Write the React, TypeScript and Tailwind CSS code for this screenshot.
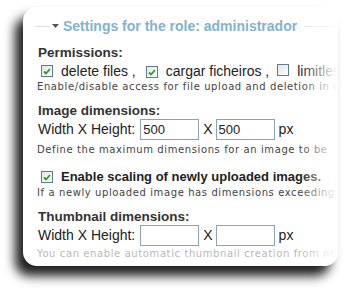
import React from 'react';

const Check = ({ checked }: { checked: boolean }) => (
  <span className="inline-flex h-[12px] w-[12px] shrink-0 items-center justify-center border border-[#5b7d92] bg-gradient-to-br from-[#e4e4e4] to-white">
    {checked && (
      <svg width="8" height="7" viewBox="0 0 8 7">
        <path d="M1 3.5 L3 5.5 L7 1" fill="none" stroke="#22a022" strokeWidth="1.8" />
      </svg>
    )}
  </span>
);

const SizeRow = ({ w, h }: { w: string; h: string }) => (
  <div className="flex h-[21px] items-center pl-[15px] text-[14px] text-[#222]">
    <span>Width X Height:</span>
    <input
      readOnly
      value={w}
      className="ml-[5px] h-[21px] w-[59px] border border-[#8aa4b4] bg-white px-[2px] text-[13px] text-[#222] outline-none"
    />
    <span className="ml-[4px]">X</span>
    <input
      readOnly
      value={h}
      className="ml-[3px] h-[21px] w-[59px] border border-[#8aa4b4] bg-white px-[2px] text-[13px] text-[#222] outline-none"
    />
    <span className="ml-[4px]">px</span>
  </div>
);

const Help = ({ children, faded }: { children: React.ReactNode; faded?: boolean }) => (
  <div
    className={`h-[12px] pl-[14px] text-[10px] leading-[12px] tracking-[0.6px] font-['DejaVu_Sans',sans-serif] ${
      faded ? 'text-[#b8b8b8]' : 'text-[#444]'
    }`}
  >
    {children}
  </div>
);

const App = () => {
  return (
    <div className="h-[290px] w-[345px] bg-white pl-[23px] pt-[7px] font-['Liberation_Sans',Arial,sans-serif]">
      <div className="relative h-[259px] w-[315px] overflow-hidden rounded-[14px] bg-white pt-[11px] shadow-[-8px_10px_11px_rgba(0,0,0,0.88)] whitespace-nowrap">
        {/* legend */}
        <div className="flex h-[16px] items-center">
          <span className="ml-[12px] h-px w-[15px] bg-[#e2e2e2]" />
          <svg className="ml-[2px]" width="7" height="4" viewBox="0 0 7 4">
            <path d="M0 0 H7 L3.5 4 Z" fill="#555" />
          </svg>
          <span className="ml-[4px] text-[14px] font-bold text-[#80b3d1]">
            Settings for the role: administrador
          </span>
          <span className="ml-[7px] h-px flex-1 bg-[#e2e2e2]" />
        </div>

        <div className="mt-[11px] flex h-[16px] items-center pl-[15px] text-[13.5px] font-bold text-[#333]">
          Permissions:
        </div>
        <div className="mt-[2px] flex h-[16px] items-center pl-[18px] text-[14px] text-[#222]">
          <Check checked />
          <span className="ml-[8px]">delete files ,</span>
          <span className="ml-[10px]">
            <Check checked />
          </span>
          <span className="ml-[8px]">cargar ficheiros ,</span>
          <span className="ml-[8px]">
            <Check checked={false} />
          </span>
          <span className="ml-[8px]">limitless</span>
        </div>
        <div className="mt-[2px]">
          <Help>Enable/disable access for file upload and deletion in user</Help>
        </div>

        <div className="mt-[10px] flex h-[16px] items-center pl-[15px] text-[13.5px] font-bold text-[#333]">
          Image dimensions:
        </div>
        <SizeRow w="500" h="500" />
        <div className="mt-[4px]">
          <Help>Define the maximum dimensions for an image to be</Help>
        </div>

        <div className="mt-[13px] flex h-[16px] items-center pl-[18px] text-[13px] font-bold text-[#222]">
          <Check checked />
          <span className="ml-[8px]">Enable scaling of newly uploaded images.</span>
        </div>
        <div className="mt-[2px]">
          <Help>If a newly uploaded image has dimensions exceeding</Help>
        </div>

        <div className="mt-[10px] flex h-[16px] items-center pl-[15px] text-[13.5px] font-bold text-[#333]">
          Thumbnail dimensions:
        </div>
        <SizeRow w="" h="" />
        <div className="mt-[2px]">
          <Help faded>You can enable automatic thumbnail creation from new</Help>
        </div>

        {/* right edge fade */}
        <div className="pointer-events-none absolute right-0 top-0 bottom-0 w-[38px] bg-gradient-to-r from-transparent to-white" />
      </div>
    </div>
  );
};

export default App;
